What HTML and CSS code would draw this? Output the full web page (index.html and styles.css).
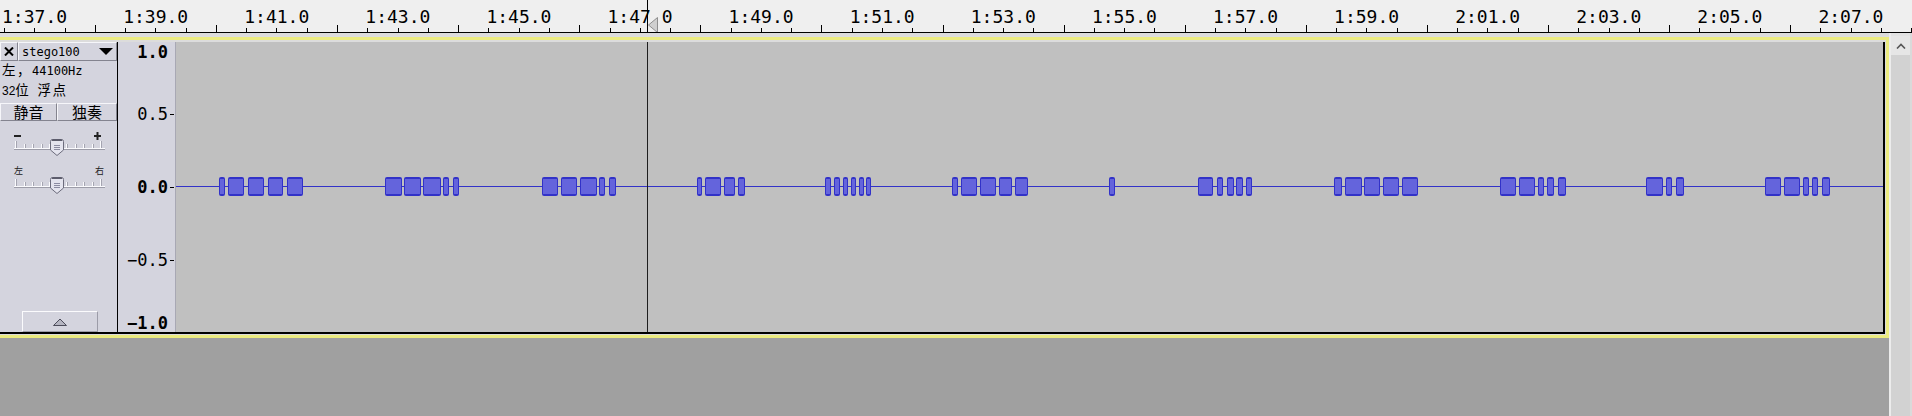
FILE: index.html
```html
<!DOCTYPE html>
<html lang="zh">
<head>
<meta charset="utf-8">
<title>stego100</title>
<link rel="stylesheet" href="styles.css">
</head>
<body>
<div class="app">
  <div class="ruler">
    <div class="ruler-labels">
      <span class="rl">1:37.0</span><span class="rl">1:39.0</span><span class="rl">1:41.0</span><span class="rl">1:43.0</span><span class="rl">1:45.0</span><span class="rl">1:47.0</span><span class="rl">1:49.0</span><span class="rl">1:51.0</span><span class="rl">1:53.0</span><span class="rl">1:55.0</span><span class="rl">1:57.0</span><span class="rl">1:59.0</span><span class="rl">2:01.0</span><span class="rl">2:03.0</span><span class="rl">2:05.0</span><span class="rl">2:07.0</span>
    </div>
    <svg class="ruler-ticks" width="1912" height="7" viewBox="0 0 1912 7">
      <path stroke="#000" stroke-width="1" d="M4.5 3V7M34.5 3V7M65.5 3V7M125.5 3V7M155.5 3V7M186.5 3V7M246.5 3V7M276.5 3V7M307.5 3V7M367.5 3V7M398.5 3V7M428.5 3V7M488.5 3V7M519.5 3V7M549.5 3V7M610.5 3V7M640.5 3V7M670.5 3V7M731.5 3V7M761.5 3V7M791.5 3V7M852.5 3V7M882.5 3V7M912.5 3V7M973.5 3V7M1003.5 3V7M1033.5 3V7M1094.5 3V7M1124.5 3V7M1154.5 3V7M1215.5 3V7M1245.5 3V7M1276.5 3V7M1336.5 3V7M1366.5 3V7M1397.5 3V7M1457.5 3V7M1487.5 3V7M1518.5 3V7M1578.5 3V7M1609.5 3V7M1639.5 3V7M1699.5 3V7M1730.5 3V7M1760.5 3V7M1820.5 3V7M1851.5 3V7M1881.5 3V7M1911.5 3V7"/>
      <path stroke="#000" stroke-width="1" d="M95.5 0V7M216.5 0V7M337.5 0V7M458.5 0V7M579.5 0V7M700.5 0V7M821.5 0V7M943.5 0V7M1064.5 0V7M1185.5 0V7M1306.5 0V7M1427.5 0V7M1548.5 0V7M1669.5 0V7M1790.5 0V7"/>
    </svg>
    <div class="ruler-cursor"></div>
    <svg class="play-head" width="10" height="16" viewBox="0 0 10 16">
      <polygon points="0.5,8 9.5,0.5 9.5,15.5" fill="#cfcfcf" stroke="#8e8e8e"/>
    </svg>
  </div>

  <div class="main">
    <div class="tracks">
      <div class="ruler-gap"></div>
      <div class="focus">
        <div class="track">
          <div class="tinfo">
            <div class="t-row1">
              <div class="t-close">
                <svg width="10" height="9" viewBox="0 0 10 9"><path d="M1 0.5L9 8.5M9 0.5L1 8.5" stroke="#000" stroke-width="2"/></svg>
              </div>
              <div class="t-name">
                <span>stego100</span>
                <svg width="14" height="7" viewBox="0 0 14 7"><polygon points="0,0 14,0 7,7" fill="#000"/></svg>
              </div>
            </div>
            <div class="t-info">
              <div class="t-line"><span class="cjk">左，</span>44100Hz</div>
              <div class="t-line"><span class="num">32</span><span class="cjk">位</span> <span class="cjk">浮点</span></div>
            </div>
            <div class="t-btns">
              <div class="t-btn mute">静音</div>
              <div class="t-btn solo">独奏</div>
            </div>
            <div class="slider">
              <div class="sl-labels">
                <svg width="7" height="10" viewBox="0 0 7 10"><rect x="0" y="7" width="7" height="2" fill="#222"/></svg>
                <svg class="sl-plus" width="10" height="12" viewBox="0 0 10 12"><rect x="0" y="7" width="7" height="2" fill="#222"/><rect x="2.5" y="4" width="2" height="8" fill="#222"/></svg>
              </div>
              <svg class="sl-track" width="117" height="20" viewBox="0 0 117 20">
                <rect x="14" y="10" width="91" height="1" fill="#fafafd"/>
                <rect x="14" y="11" width="91" height="1" fill="#9c9ca8"/>
                <path stroke="#fafafd" d="M15.5 3V10M24.5 6V10M32.5 6V10M41.5 6V10M49.5 6V10M58.5 6V10M66.5 6V10M75.5 6V10M83.5 6V10M92.5 6V10M100.5 3V10"/>
                <path stroke="#a4a4b0" d="M16.5 3V10M25.5 6V10M33.5 6V10M42.5 6V10M67.5 6V10M76.5 6V10M84.5 6V10M93.5 6V10M101.5 3V10"/>
                <path d="M50.5 3.5Q50.5 1.5 52.5 1.5H61.5Q63.5 1.5 63.5 3.5V12L57 17.5L50.5 12Z" fill="#e4e4ee" stroke="#6c6c7c"/>
                <path d="M52 2.2H62" stroke="#4c4c5c" stroke-width="1.4"/>
                <path d="M54 7.5H60M54 9.5H60M54 11.5H60" stroke="#8c8ca2"/>
              </svg>
            </div>
            <div class="slider slider-pan">
              <div class="sl-labels">
                <span class="cjk-s">左</span>
                <span class="cjk-s">右</span>
              </div>
              <svg class="sl-track" width="117" height="20" viewBox="0 0 117 20">
                <rect x="14" y="10" width="91" height="1" fill="#fafafd"/>
                <rect x="14" y="11" width="91" height="1" fill="#9c9ca8"/>
                <path stroke="#fafafd" d="M15.5 3V10M24.5 6V10M32.5 6V10M41.5 6V10M49.5 6V10M58.5 6V10M66.5 6V10M75.5 6V10M83.5 6V10M92.5 6V10M100.5 3V10"/>
                <path stroke="#a4a4b0" d="M16.5 3V10M25.5 6V10M33.5 6V10M42.5 6V10M67.5 6V10M76.5 6V10M84.5 6V10M93.5 6V10M101.5 3V10"/>
                <path d="M50.5 3.5Q50.5 1.5 52.5 1.5H61.5Q63.5 1.5 63.5 3.5V12L57 17.5L50.5 12Z" fill="#e4e4ee" stroke="#6c6c7c"/>
                <path d="M52 2.2H62" stroke="#4c4c5c" stroke-width="1.4"/>
                <path d="M54 7.5H60M54 9.5H60M54 11.5H60" stroke="#8c8ca2"/>
              </svg>
            </div>
            <div class="t-collapse">
              <svg width="14" height="8" viewBox="0 0 14 8"><polygon points="0.5,7.5 7,1 13.5,7.5" fill="#b4b4c0" stroke="#4c4c5a"/></svg>
            </div>
          </div>

          <div class="vruler">
            <div class="vr-row major"><span>1.0</span><i class="vr-gap"></i></div>
            <div class="vr-row r2"><span>0.5</span><i class="vr-tick"></i></div>
            <div class="vr-row major r3"><span>0.0</span><i class="vr-tick"></i></div>
            <div class="vr-row r4"><span>−0.5</span><i class="vr-tick"></i></div>
            <div class="vr-row major r5"><span>−1.0</span><i class="vr-gap"></i></div>
          </div>

          <div class="wave">
            <svg width="1707" height="290" viewBox="0 0 1707 290">
              <rect x="0" y="144" width="1707" height="1" fill="#3232c8"/>
              <g fill="#3232c8">
                <rect x="43" y="135" width="6" height="19" rx="2"/><rect x="52" y="135" width="16" height="19" rx="2"/><rect x="72" y="135" width="16" height="19" rx="2"/><rect x="92" y="135" width="15" height="19" rx="2"/><rect x="111" y="135" width="16" height="19" rx="2"/>
                <rect x="209" y="135" width="17" height="19" rx="2"/><rect x="228" y="135" width="17" height="19" rx="2"/><rect x="247" y="135" width="18" height="19" rx="2"/><rect x="267" y="135" width="6" height="19" rx="2"/><rect x="277" y="135" width="6" height="19" rx="2"/>
                <rect x="366" y="135" width="16" height="19" rx="2"/><rect x="385" y="135" width="16" height="19" rx="2"/><rect x="404" y="135" width="17" height="19" rx="2"/><rect x="423" y="135" width="6" height="19" rx="2"/><rect x="433" y="135" width="7" height="19" rx="2"/>
                <rect x="521" y="135" width="5" height="19" rx="2"/><rect x="529" y="135" width="16" height="19" rx="2"/><rect x="548" y="135" width="11" height="19" rx="2"/><rect x="562" y="135" width="7" height="19" rx="2"/>
                <rect x="649" y="135" width="6" height="19" rx="2"/><rect x="658" y="135" width="6" height="19" rx="2"/><rect x="667" y="135" width="5" height="19" rx="2"/><rect x="675" y="135" width="5" height="19" rx="2"/><rect x="683" y="135" width="5" height="19" rx="2"/><rect x="690" y="135" width="5" height="19" rx="2"/>
                <rect x="776" y="135" width="6" height="19" rx="2"/><rect x="785" y="135" width="16" height="19" rx="2"/><rect x="804" y="135" width="16" height="19" rx="2"/><rect x="823" y="135" width="13" height="19" rx="2"/><rect x="839" y="135" width="13" height="19" rx="2"/>
                <rect x="933" y="135" width="6" height="19" rx="2"/>
                <rect x="1022" y="135" width="15" height="19" rx="2"/><rect x="1041" y="135" width="6" height="19" rx="2"/><rect x="1051" y="135" width="7" height="19" rx="2"/><rect x="1060" y="135" width="7" height="19" rx="2"/><rect x="1070" y="135" width="6" height="19" rx="2"/>
                <rect x="1158" y="135" width="8" height="19" rx="2"/><rect x="1169" y="135" width="17" height="19" rx="2"/><rect x="1188" y="135" width="16" height="19" rx="2"/><rect x="1207" y="135" width="16" height="19" rx="2"/><rect x="1226" y="135" width="16" height="19" rx="2"/>
                <rect x="1324" y="135" width="16" height="19" rx="2"/><rect x="1343" y="135" width="16" height="19" rx="2"/><rect x="1362" y="135" width="6" height="19" rx="2"/><rect x="1371" y="135" width="7" height="19" rx="2"/><rect x="1382" y="135" width="8" height="19" rx="2"/>
                <rect x="1470" y="135" width="17" height="19" rx="2"/><rect x="1490" y="135" width="6" height="19" rx="2"/><rect x="1500" y="135" width="8" height="19" rx="2"/>
                <rect x="1589" y="135" width="16" height="19" rx="2"/><rect x="1608" y="135" width="16" height="19" rx="2"/><rect x="1627" y="135" width="6" height="19" rx="2"/><rect x="1636" y="135" width="6" height="19" rx="2"/><rect x="1646" y="135" width="8" height="19" rx="2"/>
              </g>
              <g fill="#6464dc">
                <rect x="44" y="137" width="4" height="15"/><rect x="53" y="137" width="14" height="15"/><rect x="73" y="137" width="14" height="15"/><rect x="93" y="137" width="13" height="15"/><rect x="112" y="137" width="14" height="15"/>
                <rect x="210" y="137" width="15" height="15"/><rect x="229" y="137" width="15" height="15"/><rect x="248" y="137" width="16" height="15"/><rect x="268" y="137" width="4" height="15"/><rect x="278" y="137" width="4" height="15"/>
                <rect x="367" y="137" width="14" height="15"/><rect x="386" y="137" width="14" height="15"/><rect x="405" y="137" width="15" height="15"/><rect x="424" y="137" width="4" height="15"/><rect x="434" y="137" width="5" height="15"/>
                <rect x="522" y="137" width="3" height="15"/><rect x="530" y="137" width="14" height="15"/><rect x="549" y="137" width="9" height="15"/><rect x="563" y="137" width="5" height="15"/>
                <rect x="650" y="137" width="4" height="15"/><rect x="659" y="137" width="4" height="15"/><rect x="668" y="137" width="3" height="15"/><rect x="676" y="137" width="3" height="15"/><rect x="684" y="137" width="3" height="15"/><rect x="691" y="137" width="3" height="15"/>
                <rect x="777" y="137" width="4" height="15"/><rect x="786" y="137" width="14" height="15"/><rect x="805" y="137" width="14" height="15"/><rect x="824" y="137" width="11" height="15"/><rect x="840" y="137" width="11" height="15"/>
                <rect x="934" y="137" width="4" height="15"/>
                <rect x="1023" y="137" width="13" height="15"/><rect x="1042" y="137" width="4" height="15"/><rect x="1052" y="137" width="5" height="15"/><rect x="1061" y="137" width="5" height="15"/><rect x="1071" y="137" width="4" height="15"/>
                <rect x="1159" y="137" width="6" height="15"/><rect x="1170" y="137" width="15" height="15"/><rect x="1189" y="137" width="14" height="15"/><rect x="1208" y="137" width="14" height="15"/><rect x="1227" y="137" width="14" height="15"/>
                <rect x="1325" y="137" width="14" height="15"/><rect x="1344" y="137" width="14" height="15"/><rect x="1363" y="137" width="4" height="15"/><rect x="1372" y="137" width="5" height="15"/><rect x="1383" y="137" width="6" height="15"/>
                <rect x="1471" y="137" width="15" height="15"/><rect x="1491" y="137" width="4" height="15"/><rect x="1501" y="137" width="6" height="15"/>
                <rect x="1590" y="137" width="14" height="15"/><rect x="1609" y="137" width="14" height="15"/><rect x="1628" y="137" width="4" height="15"/><rect x="1637" y="137" width="4" height="15"/><rect x="1647" y="137" width="6" height="15"/>
              </g>
              <rect x="471" y="0" width="1" height="290" fill="#1e1e1e"/>
            </svg>
          </div>
        </div>
      </div>
    </div>

    <div class="vscroll">
      <div class="vs-strip"></div>
      <div class="vs-bar">
        <div class="vs-up">
          <svg width="10" height="6" viewBox="0 0 10 6"><path d="M1 5.5L5 1.5L9 5.5" fill="none" stroke="#555" stroke-width="1.6"/></svg>
        </div>
      </div>
      <div class="vs-edge"></div>
    </div>
  </div>
</div>
</body>
</html>
```

FILE: styles.css
```css
* {
  box-sizing: border-box;
}

html,
body {
  margin: 0;
  padding: 0;
}

body {
  width: 1912px;
  height: 416px;
  overflow: hidden;
  background: #a0a0a0;
  font-family: "DejaVu Sans Mono", "Noto Sans CJK SC", monospace;
  color: #000;
}

.app {
  display: flex;
  flex-direction: column;
  height: 416px;
}

/* ---------- time ruler ---------- */
.ruler {
  position: relative;
  flex: none;
  height: 33px;
  background: #efefef;
  border-bottom: 1px solid #000;
  overflow: hidden;
}

.ruler-labels {
  display: flex;
  height: 25px;
  margin-left: -26px;
  padding-top: 6px;
}

.rl {
  flex: none;
  width: 121.1px;
  text-align: center;
  font-size: 18px;
  line-height: 21px;
  white-space: nowrap;
}

.ruler-ticks {
  display: block;
}

.ruler-cursor {
  position: absolute;
  left: 647px;
  top: 0;
  width: 1px;
  height: 32px;
  background: #000;
}

.play-head {
  position: absolute;
  left: 648px;
  top: 17px;
}

/* ---------- main area ---------- */
.main {
  flex: 1;
  display: flex;
  min-height: 0;
}

.tracks {
  width: 1889px;
  flex: none;
  display: flex;
  flex-direction: column;
}

.ruler-gap {
  height: 4px;
  background: #dcdcdc;
}

.focus {
  border: 3px solid #ebeb80;
  border-left: 0;
  padding: 2px 1px 1px 0;
  background: #dcdcdc;
}

.track {
  display: flex;
  height: 292px;
  border-right: 2px solid #000;
  border-bottom: 2px solid #000;
}

/* ---------- track control panel ---------- */
.tinfo {
  width: 118px;
  flex: none;
  display: flex;
  flex-direction: column;
  background: #d4d4de;
  border-right: 1px solid #000;
}

.t-row1 {
  display: flex;
  height: 19px;
}

.t-close,
.t-name,
.t-btn,
.t-collapse {
  border: 1px solid;
  border-color: #f6f6fa #84848f #84848f #f6f6fa;
}

.t-close {
  width: 18px;
  flex: none;
  display: flex;
  align-items: center;
  justify-content: center;
}

.t-name {
  flex: 1;
  display: flex;
  align-items: center;
  justify-content: space-between;
  padding: 0 3px 0 3px;
  font-size: 12px;
  line-height: 14px;
}

.t-info {
  padding: 0 0 0 2px;
}

.t-line {
  height: 17px;
  line-height: 17px;
  font-size: 12px;
  white-space: nowrap;
}

.t-line + .t-line {
  margin-top: 3px;
}

.cjk {
  font-family: "Noto Sans CJK SC", sans-serif;
  font-size: 13.5px;
  letter-spacing: 1.5px;
}

.num {
  font-family: "Liberation Sans", sans-serif;
  font-size: 12px;
}

.t-btns {
  display: flex;
  height: 18px;
  margin-top: 5px;
}

.t-btn {
  display: flex;
  align-items: center;
  justify-content: center;
  font-family: "Noto Sans CJK SC", sans-serif;
  font-size: 15px;
  line-height: 16px;
}

.t-btn.mute {
  width: 57px;
}

.t-btn.solo {
  flex: 1;
}

.slider {
  margin-top: 7px;
}

.slider-pan {
  margin-top: 8px;
}

.sl-labels {
  height: 10px;
  display: flex;
  justify-content: space-between;
  align-items: flex-start;
  padding: 0 13px 0 14px;
}

.sl-plus {
  flex: none;
}

.cjk-s {
  font-family: "Noto Sans CJK SC", sans-serif;
  font-size: 9px;
  line-height: 10px;
  color: #222;
}

.sl-track {
  display: block;
}

.t-collapse {
  margin: auto 0 0 22px;
  width: 76px;
  height: 21px;
  display: flex;
  align-items: center;
  justify-content: center;
  border-color: #fbfbfd #9c9ca8 #9c9ca8 #fbfbfd;
}

/* ---------- amplitude ruler ---------- */
.vruler {
  width: 58px;
  flex: none;
  display: flex;
  flex-direction: column;
  padding-top: 3px;
  background: #d4d4de;
  border-right: 1px solid #a8a8b4;
  font-size: 17px;
}

.vr-row {
  height: 14px;
  line-height: 14px;
  display: flex;
  justify-content: flex-end;
  align-items: center;
  white-space: nowrap;
}

.vr-row.major {
  font-weight: bold;
}

.vr-row.r2 {
  margin-top: 48px;
}

.vr-row.r3 {
  margin-top: 59px;
}

.vr-row.r4 {
  margin-top: 59px;
}

.vr-row.r5 {
  margin-top: 49px;
}

.vr-tick,
.vr-gap {
  display: block;
  width: 4px;
  height: 1px;
  margin: 0 1px 0 2px;
}

.vr-tick {
  background: #000;
}

/* ---------- waveform ---------- */
.wave {
  width: 1707px;
  flex: none;
  background: #c0c0c0;
}

.wave svg {
  display: block;
}

/* ---------- vertical scrollbar ---------- */
.vscroll {
  width: 23px;
  flex: none;
  display: flex;
  background: #e2e2e2;
}

.vs-strip {
  width: 2px;
  background: #ececec;
}

.vs-bar {
  width: 19px;
  margin-top: 3px;
  background: #d2d2d2;
}

.vs-up {
  height: 19px;
  display: flex;
  justify-content: center;
  padding-top: 7px;
  background: #e6e6e6;
}

.vs-edge {
  width: 2px;
  background: #dadada;
}
```
